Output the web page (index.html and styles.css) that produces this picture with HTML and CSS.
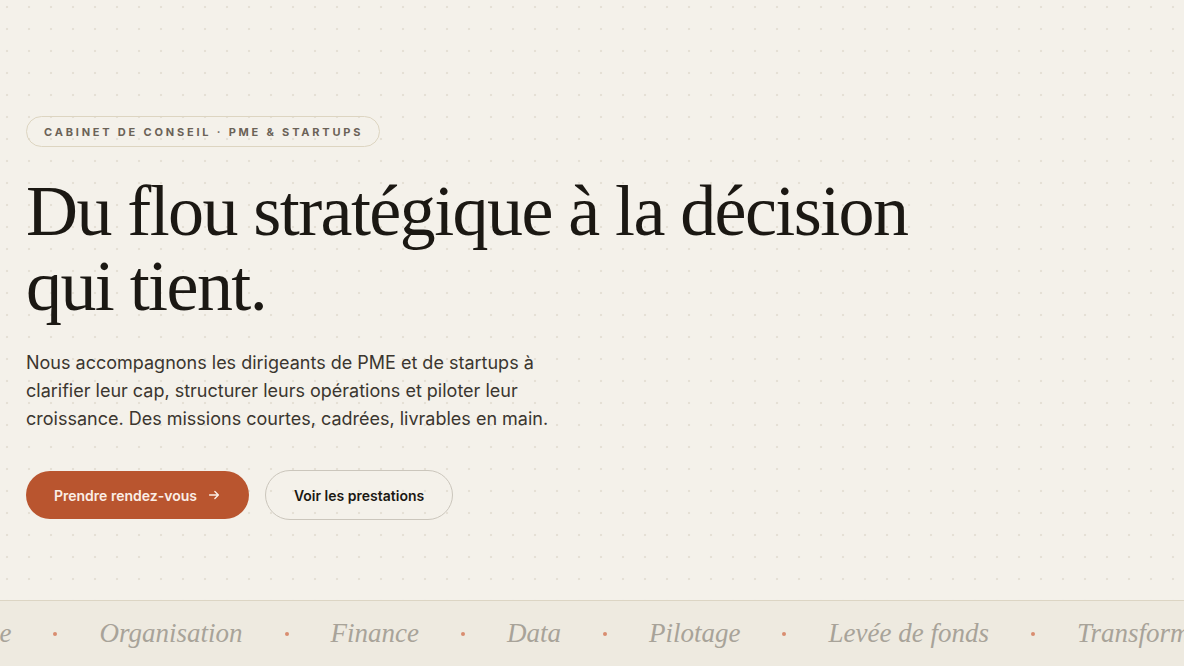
FILE: index.html
```html
<!DOCTYPE html>
<html lang="fr">
<head>
<meta charset="utf-8">
<title>Cabinet de conseil · PME &amp; Startups</title>
<link rel="stylesheet" href="styles.css">
</head>
<body>
<main class="hero">
  <span class="eyebrow">Cabinet de conseil · PME &amp; Startups</span>
  <h1 class="hero-title">Du flou stratégique à la décision<br>qui tient.</h1>
  <p class="hero-lead">Nous accompagnons les dirigeants de PME et de startups à clarifier leur cap, structurer leurs opérations et piloter leur croissance. Des missions courtes, cadrées, livrables en main.</p>
  <div class="hero-actions">
    <a class="btn btn-primary" href="#contact">Prendre rendez-vous
      <svg class="btn-arrow" viewBox="0 0 16 16" width="14" height="14" aria-hidden="true"><path d="M3 8h10M9 4l4 4-4 4" fill="none" stroke="currentColor" stroke-width="1.6" stroke-linecap="round" stroke-linejoin="round"/></svg>
    </a>
    <a class="btn btn-ghost" href="#prestations">Voir les prestations</a>
  </div>
</main>
<section class="ticker" aria-label="Domaines d'intervention">
  <div class="ticker-track">
    <span class="ticker-item">Stratégie</span><span class="ticker-dot"></span>
    <span class="ticker-item">Organisation</span><span class="ticker-dot"></span>
    <span class="ticker-item">Finance</span><span class="ticker-dot"></span>
    <span class="ticker-item">Data</span><span class="ticker-dot"></span>
    <span class="ticker-item">Pilotage</span><span class="ticker-dot"></span>
    <span class="ticker-item">Levée de fonds</span><span class="ticker-dot"></span>
    <span class="ticker-item">Transformation</span><span class="ticker-dot"></span>
    <span class="ticker-item">Stratégie</span><span class="ticker-dot"></span>
  </div>
</section>
</body>
</html>
```
FILE: styles.css
```css
* { box-sizing: border-box; }

html, body { margin: 0; padding: 0; }

body {
  background-color: #f4f1ea;
  background-image: radial-gradient(circle, #e5e0d5 1px, transparent 1.6px);
  background-size: 22px 22px;
  background-position: -4px -4px;
  font-family: "Inter", "Liberation Sans", sans-serif;
  color: #1c1915;
  overflow: hidden;
}

.hero {
  height: 600px;
  padding: 116px 26px 0;
  display: flex;
  flex-direction: column;
  align-items: flex-start;
}

.eyebrow {
  display: inline-flex;
  align-items: center;
  height: 31px;
  padding: 0 16px 0 17px;
  border: 1px solid #ddd5c1;
  border-radius: 999px;
  font-size: 11px;
  font-weight: 700;
  letter-spacing: 0.255em;
  text-transform: uppercase;
  color: #6b6257;
}

.hero-title {
  margin: 27px 0 0;
  font-family: "Liberation Serif", "Times New Roman", serif;
  font-weight: 400;
  font-size: 72px;
  line-height: 75px;
  letter-spacing: -0.022em;
  color: #1b1813;
}

.hero-lead {
  margin: 25px 0 0;
  max-width: 560px;
  font-size: 18px;
  line-height: 28px;
  color: #3b362f;
}

.hero-actions {
  margin-top: 37px;
  display: flex;
  gap: 16px;
  align-items: center;
}

.btn {
  display: inline-flex;
  align-items: center;
  gap: 10px;
  height: 50px;
  border-radius: 999px;
  font-size: 14px;
  font-weight: 600;
  text-decoration: none;
}

.btn-primary {
  height: 48px;
  padding: 0 28px;
  background: #b9552f;
  color: #fbeee6;
}

.btn-arrow { display: block; }

.btn-ghost {
  padding: 0 28px;
  border: 1px solid #cbc6bc;
  color: #1b1813;
}

.ticker {
  height: 66px;
  border-top: 1px solid #dcd5c4;
  background-color: #eeeae0;
  display: flex;
  align-items: center;
  overflow: hidden;
}

.ticker-track {
  display: flex;
  align-items: center;
  gap: 42px;
  white-space: nowrap;
  transform: translateX(-86px);
}

.ticker-item {
  font-family: "Liberation Serif", "Times New Roman", serif;
  font-style: italic;
  font-size: 27px;
  color: #a8a399;
}

.ticker-dot {
  width: 4px;
  height: 4px;
  border-radius: 50%;
  background: #d88d70;
}
```
